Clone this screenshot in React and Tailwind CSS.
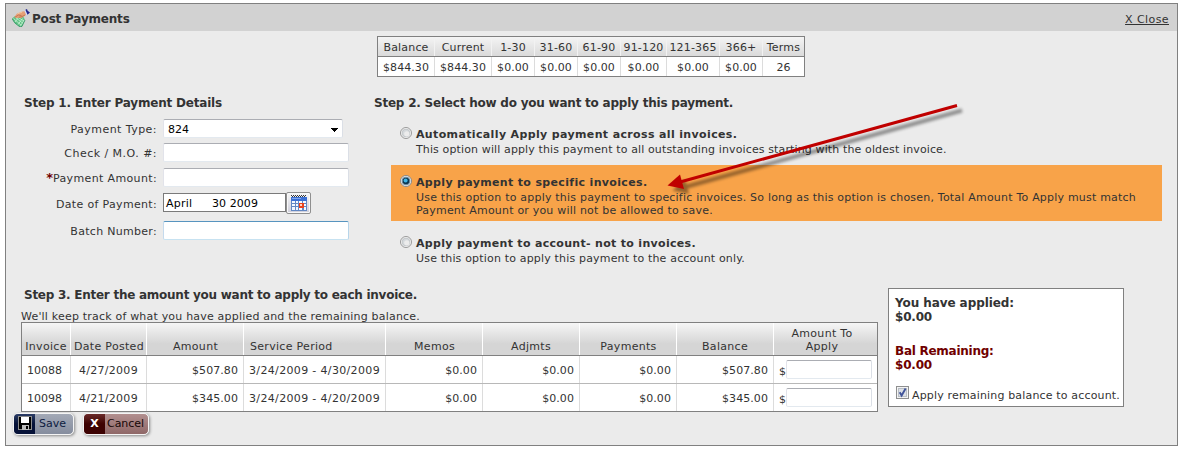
import React from "react";

const agingColumns = [
  { label: "Balance", value: "$844.30", width: "w-[57px]" },
  { label: "Current", value: "$844.30", width: "w-[57px]" },
  { label: "1-30", value: "$0.00", width: "w-[43px]" },
  { label: "31-60", value: "$0.00", width: "w-[43px]" },
  { label: "61-90", value: "$0.00", width: "w-[43px]" },
  { label: "91-120", value: "$0.00", width: "w-[46px]" },
  { label: "121-365", value: "$0.00", width: "w-[53px]" },
  { label: "366+", value: "$0.00", width: "w-[43px]" },
  { label: "Terms", value: "26", width: "w-[41px]" },
];

const invoices = [
  { id: "10088", posted: "4/27/2009", amount: "$507.80", period: "3/24/2009 - 4/30/2009", balance: "$507.80" },
  { id: "10098", posted: "4/21/2009", amount: "$345.00", period: "3/24/2009 - 4/20/2009", balance: "$345.00" },
];

const fieldBorder = "rounded-[2px] border border-t-[#abadb3] border-r-[#dbdfe6] border-b-[#e3e9ef] border-l-[#e2e3ea]";
const invoiceGrid = "grid grid-cols-[49px_76px_97px_142px_97px_97px_97px_97px_103px]";

function PaymentIcon() {
  return (
    <svg className="h-[18px] w-[18px] shrink-0" viewBox="0 0 18 18">
      <path d="M0 9.500 3 7h8l2 4-3 6.500-2.500.3L3 14.500z" fill="#62c286" />
      <path d="M0 9.500 2.500 13.500 8 18l2-.7L13 11" fill="none" stroke="#2d9060" strokeWidth="0.8" />
      <path d="M1.500 9.500 9 16M3.500 8.500l7 5.500M7 9l5 3M3 13l4-5M6 15.500l4.500-6M8.500 17l3.500-6" stroke="#c6f3d3" strokeWidth="0.8" />
      <path d="M2.300 8 5 4.500 9.500 2.700 13 2l2 3.200L12.500 7 9 9.300 6.500 8.600 4.600 9.300z" fill="#e6a077" />
      <path d="M3 8.200 6.500 6l3 .6M6.500 8.400 10 7.600l3-1.600" fill="none" stroke="#bb6b48" strokeWidth="0.8" />
      <path d="M5.500 4.800 10 3.200" stroke="#f6cba8" strokeWidth="0.8" />
      <path d="M12.300 1.700 13.800.8l2 4.600-1.500.8z" fill="#d5dcf4" />
      <path d="M13.400.8 15 0l.6 1.800L18 3.600 15.500 5.700z" fill="#23268f" />
    </svg>
  );
}

function CalendarIcon() {
  return (
    <svg className="h-[16px] w-[16px]" viewBox="0 0 16 16" shapeRendering="crispEdges">
      <rect x="0" y="1" width="16" height="15" fill="#6288c4" />
      <rect x="0" y="0" width="16" height="2" fill="#e9edf5" />
      <path d="M0 0h1v1H0zM2 0h1v1H2zM4 0h1v1H4zM6 0h1v1H6zM8 0h1v1H8zM10 0h1v1h-1zM12 0h1v1h-1zM14 0h1v1h-1zM1 1h1v1H1zM3 1h1v1H3zM5 1h1v1H5zM7 1h1v1H7zM9 1h1v1H9zM11 1h1v1h-1zM13 1h1v1h-1z" fill="#333" />
      <rect x="0" y="2" width="16" height="4" fill="#3b70d4" />
      <rect x="1" y="3" width="9" height="1" fill="#7ea6ee" />
      <path d="M1 6h3v2H1zM5 6h2v2H5zM8 6h3v2H8zM12 6h3v2h-3zM1 9h3v2H1zM5 9h2v2H5zM1 12h3v3H1zM5 12h2v3H5zM8 13h3v2H8zM13 9h2v2h-2zM13 12h2v3h-2z" fill="#f4f8ff" />
      <rect x="8" y="8" width="5" height="5" fill="#e8431f" />
      <rect x="10" y="10" width="1" height="1" fill="#fff" />
      <rect x="9" y="9" width="2" height="2" fill="#fbd5c8" />
    </svg>
  );
}

function DiskIcon() {
  return (
    <svg className="h-[14px] w-[14px]" viewBox="0 0 14 14" shapeRendering="crispEdges">
      <rect x="0" y="0" width="14" height="14" fill="#8d8d8d" />
      <rect x="1" y="1" width="12" height="12" fill="#000" />
      <rect x="3" y="1" width="8" height="6" fill="#fff" />
      <rect x="4" y="9" width="7" height="5" fill="#b9b9b9" />
      <rect x="8" y="10" width="2" height="3" fill="#000" />
    </svg>
  );
}

function Radio({ checked }) {
  return (
    <svg className="h-[12px] w-[12px] shrink-0" viewBox="0 0 12 12">
      <circle cx="6" cy="6" r="5.500" fill="#f6f6f6" stroke={checked ? "#7b8187" : "#8e8f8f"} strokeWidth="0.9" />
      <circle cx="6" cy="6" r="3.900" fill={checked ? "#cfe3ee" : "#d5d9dc"} stroke={checked ? "#3c5c74" : "#b9bdc0"} strokeWidth="0.7" />
      {checked ? (
        <>
          <circle cx="6" cy="6" r="3.300" fill="#0b3550" />
          <circle cx="5.600" cy="5.500" r="2" fill="#3fb4e4" />
        </>
      ) : (
        <circle cx="6.800" cy="6.800" r="2.600" fill="#ececec" />
      )}
    </svg>
  );
}

function AgingTable() {
  return (
    <div className="ml-[371px] flex w-[428px] border border-[#808080]">
      {agingColumns.map((c, i) => (
        <div key={c.label} className={`${c.width} shrink-0 whitespace-nowrap text-center`}>
          <div className={`h-[19px] bg-linear-to-b from-[#f4f4f4] to-[#dadada] pt-[4px] leading-[14px] tracking-[0.18px] ${i < 8 ? "border-r border-[#f2f2f2]" : ""}`}>{c.label}</div>
          <div className="h-px bg-[#808080]" />
          <div className={`h-[19px] bg-white pt-[4px] leading-[14px] tracking-[0.07px] ${i < 8 ? "border-r border-[#dcdcdc]" : ""}`}>{c.value}</div>
        </div>
      ))}
    </div>
  );
}

function Row({ label, required, className = "", labelClass = "mt-[4px] tracking-[0.3px]", children }) {
  return (
    <div className={`flex items-start ${className}`}>
      <label className={`w-[151px] text-right leading-[14px] ${labelClass}`}>
        {required && <b className="text-[13px] leading-[10px] tracking-normal text-[#700000]">*</b>}
        {label}
      </label>
      <div className="ml-[6px] flex items-start">{children}</div>
    </div>
  );
}

function PaymentDetails() {
  return (
    <div className="w-[368px] shrink-0 pt-[19px]">
      <h2 className="ml-[18px] text-[12px] font-bold leading-[14px] tracking-[-0.19px]">Step 1. Enter Payment Details</h2>
      <Row label="Payment Type:" className="mt-[9px]" labelClass="mt-[4px] tracking-[0.45px]">
        <div className={`flex h-[19px] w-[180px] justify-between bg-white pl-[4px] pr-[4px] text-black ${fieldBorder}`}>
          <span className="mt-[3px] leading-[14px]">824</span>
          <svg className="mt-[8px] h-[4px] w-[7px]" viewBox="0 0 7 4" shapeRendering="crispEdges">
            <path d="M0 0h7v1H0zM1 1h5v1H1zM2 2h3v1H2zM3 3h1v1H3z" fill="#000" />
          </svg>
        </div>
      </Row>
      <Row label="Check / M.O. #:" className="mt-[5px]" labelClass="mt-[4px] tracking-[0.47px]">
        <input className={`h-[19px] w-[186px] bg-white ${fieldBorder}`} />
      </Row>
      <Row label="Payment Amount:" required className="mt-[6px]" labelClass="mt-[4px] tracking-[0.36px]">
        <input className={`h-[19px] w-[186px] bg-white ${fieldBorder}`} />
      </Row>
      <Row label="Date of Payment:" className="mt-[5px] h-[22px]" labelClass="mt-[6px] tracking-[0.33px]">
        <div className="mt-px flex h-[19px] w-[123px] border border-[#7a7a7a] bg-white pl-[2px] text-black">
          <span className="mt-[3px] w-[46px] leading-[14px] tracking-[0.2px]">April</span>
          <span className="mt-[3px] leading-[14px] tracking-[0.07px]">30 2009</span>
        </div>
        <button className="flex h-[22px] w-[25px] justify-center rounded-[2px] border border-[#8f8f8f] bg-linear-to-b from-[#f6f6f6] to-[#cfcfdb] pt-[2px] shadow-[inset_0_0_0_1px_#f8f8f8]">
          <CalendarIcon />
        </button>
      </Row>
      <Row label="Batch Number:" className="mt-[7px]">
        <input className="h-[19px] w-[186px] rounded-[2px] border border-t-[#5794bf] border-r-[#b7d5ea] border-b-[#c7e2f1] border-l-[#c5daed] bg-white" />
      </Row>
    </div>
  );
}

function Option({ title, titleClass, checked, className, children }) {
  return (
    <div className={`ml-[17px] flex w-[771px] gap-[4px] pl-[9px] ${className}`}>
      <Radio checked={checked} />
      <div className="whitespace-nowrap">
        <div className={`pt-px font-bold leading-[14px] ${titleClass}`}>{title}</div>
        <div className="mt-px leading-[13px]">{children}</div>
      </div>
    </div>
  );
}

function ApplyOptions() {
  return (
    <div className="pt-[19px]">
      <h2 className="text-[12px] font-bold leading-[14px] tracking-[-0.22px]">Step 2. Select how do you want to apply this payment.</h2>
      <Option title="Automatically Apply payment across all invoices." titleClass="tracking-[0.36px]" className="mt-[17px]">
        <span className="tracking-[0.125px]">This option will apply this payment to all outstanding invoices starting with the oldest invoice.</span>
      </Option>
      <Option checked title="Apply payment to specific invoices." titleClass="tracking-[0.34px]" className="mt-[9px] h-[56px] bg-[#f8a349] pt-[10px]">
        <div className="tracking-[0.206px]">Use this option to apply this payment to specific invoices. So long as this option is chosen, Total Amount To Apply must match</div>
        <div className="tracking-[0.2px]">Payment Amount or you will not be allowed to save.</div>
      </Option>
      <Option title="Apply payment to account- not to invoices." titleClass="tracking-[0.31px]" className="mt-[15px]">
        <span className="tracking-[0.175px]">Use this option to apply this payment to the account only.</span>
      </Option>
    </div>
  );
}

function HeadCell({ children, className = "text-center" }) {
  return <div className={`flex flex-col justify-end border-r border-white pb-[2px] leading-[13px] tracking-[0.3px] last:border-r-0 ${className}`}>{children}</div>;
}

function Cell({ children, className = "pr-[5px] text-right tracking-[0.07px]" }) {
  return <div className={`border-r border-[#dcdcdc] pt-[8px] leading-[14px] ${className}`}>{children}</div>;
}

function InvoiceTable() {
  return (
    <div className="w-[857px] whitespace-nowrap border border-[#808080] bg-white">
      <div className={`${invoiceGrid} h-[33px] border-b border-[#808080] bg-linear-to-b from-[#f6f6f6] via-[#d5d5d5] via-65% to-[#d5d5d5]`}>
        <HeadCell>Invoice</HeadCell>
        <HeadCell className="pl-px text-center">Date Posted</HeadCell>
        <HeadCell className="pl-px text-center">Amount</HeadCell>
        <HeadCell className="pl-[6px]">Service Period</HeadCell>
        <HeadCell className="pl-px text-center">Memos</HeadCell>
        <HeadCell>Adjmts</HeadCell>
        <HeadCell className="pl-px text-center">Payments</HeadCell>
        <HeadCell>Balance</HeadCell>
        <HeadCell className="pr-[7px] text-center"><span>Amount To</span><span>Apply</span></HeadCell>
      </div>
      {invoices.map((r, i) => (
        <div key={r.id} className={`${invoiceGrid} ${i === 0 ? "h-[28px] border-b border-[#b8b8b8]" : "h-[27px]"}`}>
          <Cell className="pl-[5px]">{r.id}</Cell>
          <Cell className="pl-[8px] tracking-[0.28px]">{r.posted}</Cell>
          <Cell>{r.amount}</Cell>
          <Cell className="pl-[5px] tracking-[0.344px]">{r.period}</Cell>
          <Cell>$0.00</Cell>
          <Cell>$0.00</Cell>
          <Cell>$0.00</Cell>
          <Cell>{r.balance}</Cell>
          <div className="flex pl-[5px]">
            <span className="w-[7px] pt-[9px] leading-[14px]">$</span>
            <input className={`mt-[4px] h-[19px] w-[86px] bg-white ${fieldBorder}`} />
          </div>
        </div>
      ))}
    </div>
  );
}

function Summary() {
  return (
    <div className="ml-[10px] h-[119px] w-[236px] shrink-0 whitespace-nowrap border border-[#808080] bg-white pl-[6px] pt-[7px] text-[12px] font-bold leading-[14px]">
      <div className="tracking-[-0.08px]">You have applied:</div>
      <div className="tracking-[-0.2px]">$0.00</div>
      <div className="mt-[20px] tracking-[-0.26px] text-[#700000]">Bal Remaining:</div>
      <div className="tracking-[-0.2px] text-[#700000]">$0.00</div>
      <div className="mt-[14px] flex gap-[3px] pl-px text-[11px] font-normal">
        <svg className="h-[13px] w-[13px]" viewBox="0 0 13 13">
          <rect x=".5" y=".5" width="12" height="12" fill="#f4f4f4" stroke="#8e8f8f" />
          <rect x="2.500" y="2.500" width="8" height="8" fill="#dde1e6" stroke="#b9bec5" />
          <path d="M3.700 6.300 5.600 9.500 9.600 2.600" fill="none" stroke="#41549a" strokeWidth="1.900" />
        </svg>
        <span className="mt-[3px] leading-[14px] tracking-[0.164px]">Apply remaining balance to account.</span>
      </div>
    </div>
  );
}

function Actions() {
  return (
    <div className="ml-[7px] mt-px flex gap-[9px]">
      <button className="flex h-[22px] w-[61px] overflow-hidden rounded-[5px] border border-[#f4f4f4] bg-linear-to-b from-[#a3a9b6] to-[#858d9e] text-[#0d1b3f] shadow-[1px_1px_3px_#888]">
        <span className="flex h-full w-[21px] items-start justify-center bg-linear-to-b from-[#2c3d66] via-[#061238] to-[#061238] pt-[2px]"><DiskIcon /></span>
        <span className="ml-[4px] mt-[3px] leading-[14px]">Save</span>
      </button>
      <button className="flex h-[22px] w-[66px] overflow-hidden rounded-[5px] border border-[#f4f4f4] bg-linear-to-b from-[#b28f8f] to-[#8f6868] text-[#160606] shadow-[1px_1px_3px_#888]">
        <span className="h-full w-[21px] bg-linear-to-b from-[#6b2a2a] via-[#3d0202] to-[#3d0202] pt-[3px] text-center text-[11px] font-bold leading-[14px] text-white">X</span>
        <span className="ml-[2px] mt-[3px] leading-[14px] tracking-[-0.05px]">Cancel</span>
      </button>
    </div>
  );
}

function PointerArrow() {
  return (
    <svg className="pointer-events-none absolute left-[655px] top-[95px] h-[115px] w-[320px]" viewBox="655 95 320 115">
      <defs>
        <filter id="soft" x="-10%" y="-20%" width="120%" height="140%"><feGaussianBlur stdDeviation="1.5" /></filter>
      </defs>
      <g transform="translate(5 5)" filter="url(#soft)" opacity="0.4">
        <path d="M957 105.500 680 182" stroke="#000" strokeWidth="4" />
        <path d="M667.500 185.500 680 174.500 684 189z" fill="#000" />
      </g>
      <path d="M957 105.500 680 182" stroke="#c00000" strokeWidth="3" />
      <path d="M667.500 185.500 680 174.500 684 189z" fill="#c00000" />
    </svg>
  );
}

export default function App() {
  return (
    <div className="relative h-[453px] w-[1185px] overflow-hidden bg-white pl-[5px] pt-[3px] font-['DejaVu_Sans',Verdana,sans-serif] text-[11px] text-[#333]">
      <div className="h-[443px] w-[1173px] border border-[#808080] bg-[#ebebeb]">
        <header className="flex h-[27px] justify-between bg-[#d2d2d2] pl-[6px] pr-[8px]">
          <div className="flex gap-[2px] pt-[5px]">
            <PaymentIcon />
            <h1 className="mt-[3px] text-[12px] font-bold leading-[14px] tracking-[-0.2px]">Post Payments</h1>
          </div>
          <a className="mt-[9px] h-[14px] leading-[14px] tracking-[0.42px] underline underline-offset-1">X Close</a>
        </header>
        <div className="pt-[5px]"><AgingTable /></div>
        <div className="flex h-[211px]">
          <PaymentDetails />
          <ApplyOptions />
        </div>
        <div className="ml-[15px] flex">
          <div className="w-[857px]">
            <h2 className="ml-[3px] text-[12px] font-bold leading-[14px] tracking-[-0.26px]">Step 3. Enter the amount you want to apply to each invoice.</h2>
            <p className="mt-[8px] h-[12px] leading-[14px] tracking-[0.197px]">We'll keep track of what you have applied and the remaining balance.</p>
            <InvoiceTable />
          </div>
          <Summary />
        </div>
        <Actions />
      </div>
      <PointerArrow />
    </div>
  );
}
